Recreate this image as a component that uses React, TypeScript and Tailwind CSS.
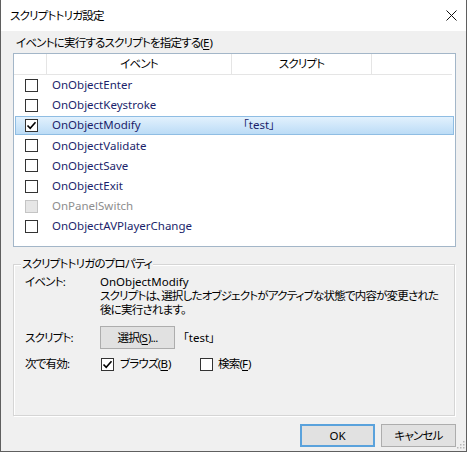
import React from 'react';

interface TriggerRow {
  name: string;
  checked: boolean;
  disabled?: boolean;
  script?: string;
}

const rows: TriggerRow[] = [
  { name: 'OnObjectEnter', checked: false },
  { name: 'OnObjectKeystroke', checked: false },
  { name: 'OnObjectModify', checked: true, script: '「test」' },
  { name: 'OnObjectValidate', checked: false },
  { name: 'OnObjectSave', checked: false },
  { name: 'OnObjectExit', checked: false },
  { name: 'OnPanelSwitch', checked: false, disabled: true },
  { name: 'OnObjectAVPlayerChange', checked: false },
];

const CheckBox: React.FC<{ checked: boolean; disabled?: boolean }> = ({ checked, disabled }) => (
  <span
    className={`w-[13px] h-[13px] border flex items-center justify-center shrink-0 ${
      disabled ? 'bg-[#e6e6e6] border-[#c4c4c4]' : 'bg-white border-[#333333]'
    }`}
  >
    {checked && (
      <svg width="11" height="11" viewBox="0 0 11 11">
        <path d="M1.5 5.5 L4.2 8.3 L9.5 2.2" fill="none" stroke="#000" strokeWidth="1.6" />
      </svg>
    )}
  </span>
);

// アクセスキー付きラベル
const Mnemonic: React.FC<{ before: string; keyChar: string; after?: string }> = ({ before, keyChar, after = ')' }) => (
  <>
    {before}(<span className="underline underline-offset-2 tracking-normal">{keyChar}</span>{after}
  </>
);

const App: React.FC = () => {
  return (
    <div
      className="w-[469px] h-[454px] bg-white text-[11.5px] text-black tracking-[-0.8px] [font-feature-settings:'palt']"
      style={{ fontFamily: '"Noto Sans", "Noto Sans CJK JP", sans-serif' }}
    >
      <div className="w-[467px] h-[452px] border border-[#5f5f5f] border-t-0 flex flex-col bg-[#f0f0f0] relative">
        {/* タイトルバー */}
        <div className="h-[31px] bg-white flex items-center justify-between pl-[9px] pr-[9px] shrink-0">
          <span className="leading-[16px]">スクリプトトリガ設定</span>
          <svg width="11" height="11" viewBox="0 0 11 11">
            <path d="M0.5 0.5 L10.5 10.5 M10.5 0.5 L0.5 10.5" stroke="#111" strokeWidth="1" />
          </svg>
        </div>

        <div className="flex flex-col pl-[12px] pt-[4px]">
          <div className="leading-[16px] pl-[3px]">
            <Mnemonic before="イベントに実行するスクリプトを指定する" keyChar="E" />
          </div>

          {/* リスト */}
          <div className="mt-[2px] w-[443px] h-[194px] border border-[#a3b6c8] bg-white flex flex-col">
            <div className="h-[21px] flex border-b border-[#e5e5e5] mr-[3px] shrink-0">
              <div className="w-[33px] border-r border-[#e5e5e5]" />
              <div className="w-[185px] border-r border-[#e5e5e5] flex items-center justify-center">イベント</div>
              <div className="w-[140px] border-r border-[#e5e5e5] flex items-center justify-center">スクリプト</div>
              <div className="flex-1" />
            </div>
            {rows.map(row => {
              const selected = row.name === 'OnObjectModify';
              return (
                <div key={row.name} className="h-[20.2px] flex items-center px-[1px]">
                  <div
                    className={`flex-1 h-[19px] flex items-center border ${
                      selected
                        ? 'bg-gradient-to-b from-[#e2f1fd] to-[#bcdcf6] border-[#8fbde3]'
                        : 'border-transparent'
                    }`}
                  >
                    <div className="w-[36px] pl-[9px] flex items-center">
                      <CheckBox checked={row.checked} disabled={row.disabled} />
                    </div>
                    <div
                      className={`w-[191px] leading-[16px] tracking-normal ${
                        row.disabled ? 'text-[#8e8e8e]' : 'text-[#1b1f6b]'
                      }`}
                    >
                      {row.name}
                    </div>
                    {row.script && <div className="leading-[16px] tracking-normal text-[#1b1f6b]">{row.script}</div>}
                  </div>
                </div>
              );
            })}
          </div>

          {/* プロパティ */}
          <div className="mt-[17px] w-[442px] h-[152px] border border-[#d5d5d5] shadow-[inset_1px_1px_0_#ffffff,1px_1px_0_#ffffff] relative pt-[10px] pl-[11px]">
            <span className="absolute -top-[9px] left-[7px] px-[1px] bg-[#f0f0f0] leading-[16px]">
              スクリプトトリガのプロパティ
            </span>
            <div className="flex leading-[14px]">
              <div className="w-[75px]">イベント:</div>
              <div className="flex flex-col whitespace-nowrap">
                <span className="tracking-normal">OnObjectModify</span>
                <span>スクリプトは、選択したオブジェクトがアクティブな状態で内容が変更された</span>
                <span>後に実行されます。</span>
              </div>
            </div>
            <div className="flex items-center mt-[9px]">
              <div className="w-[75px]">スクリプト:</div>
              <button className="w-[75px] h-[23px] bg-[#e1e1e1] border border-[#adadad] flex items-center justify-center leading-[16px]">
                <Mnemonic before="選択" keyChar="S" after=")..." />
              </button>
              <span className="ml-[8px] tracking-normal">「test」</span>
            </div>
            <div className="flex items-center mt-[7px] h-[16px]">
              <div className="w-[76px]">次で有効:</div>
              <CheckBox checked={true} />
              <span className="ml-[6px] w-[80px]">
                <Mnemonic before="ブラウズ" keyChar="B" />
              </span>
              <CheckBox checked={false} />
              <span className="ml-[5px]">
                <Mnemonic before="検索" keyChar="F" />
              </span>
            </div>
          </div>

          {/* ボタン */}
          <div className="mt-[8px] w-[443px] flex justify-end gap-[6px]">
            <button className="w-[75px] h-[23px] bg-[#e1e1e1] border-2 border-[#5aa2dc] flex items-center justify-center tracking-normal">
              OK
            </button>
            <button className="w-[75px] h-[23px] bg-[#e1e1e1] border border-[#adadad] flex items-center justify-center">
              キャンセル
            </button>
          </div>
        </div>

        {/* サイズ変更グリップ */}
        <svg width="10" height="10" viewBox="0 0 10 10" className="absolute right-[1px] bottom-[1px]">
          {[
            [8, 0],
            [5, 3],
            [8, 3],
            [2, 6],
            [5, 6],
            [8, 6],
          ].map(([x, y]) => (
            <rect key={`${x}-${y}`} x={x} y={y + 1} width="1.5" height="1.5" fill="#b8b8b8" />
          ))}
        </svg>
      </div>
    </div>
  );
};

export default App;
